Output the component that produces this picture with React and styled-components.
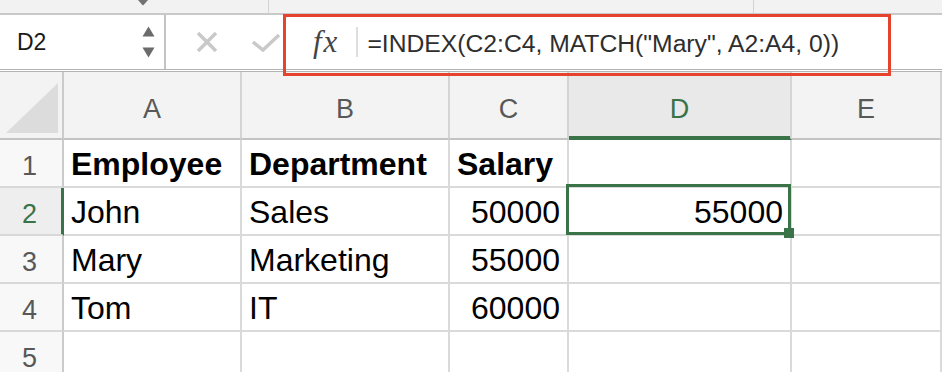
import React from 'react';
import styled, { createGlobalStyle } from 'styled-components';

const GREEN = '#3b7349';

const GlobalStyle = createGlobalStyle`
  html, body {
    margin: 0;
    padding: 0;
    background: #fff;
  }
  body {
    font-family: 'Liberation Sans', Arial, sans-serif;
  }
`;

const Window = styled.div`
  position: relative;
  width: 942px;
  height: 372px;
  overflow: hidden;
  background: #fff;
`;

// ribbon remnants above the formula bar
const TopStrip = styled.div`
  display: flex;
  height: 13px;
  background: #f2f2f2;
`;

const StripSegment = styled.div`
  flex: none;
  box-sizing: border-box;
  width: ${(p) => p.$width}px;
  border-right: 1px solid #d4d4d4;
  display: flex;
  align-items: flex-start;
  padding-left: ${(p) => p.$inset || 0}px;
`;

const FormulaBar = styled.div`
  display: flex;
  box-sizing: border-box;
  height: 59px;
  border-top: 2px solid #c9c9c9;
  border-bottom: 3px double #b3b3b3;
  background: #fff;
`;

const NameBox = styled.div`
  flex: none;
  box-sizing: border-box;
  width: 166px;
  display: flex;
  align-items: center;
  padding: 0 9px 0 17px;
  border-right: 2px solid #c4c4c4;
  font-size: 23px;
  color: #1a1a1a;
`;

const Spinner = styled.svg`
  margin-left: auto;
  display: block;
`;

const EditActions = styled.div`
  flex: none;
  display: flex;
  align-items: center;
  padding-left: 30px;
  gap: 33px;
`;

const ActionIcon = styled.svg`
  display: block;
  fill: none;
  stroke: #c9c9c9;
  stroke-width: 3.5;
`;

const FormulaInput = styled.div`
  flex: 1;
  display: flex;
  align-items: center;
  margin-left: 32px;
  min-width: 0;
`;

const FxLabel = styled.span`
  font-family: 'Liberation Serif', 'Times New Roman', serif;
  font-style: italic;
  font-size: 31px;
  letter-spacing: 2px;
  color: #444;
`;

const FxDivider = styled.span`
  width: 2px;
  height: 30px;
  margin-left: 17px;
  background: #dedede;
`;

const FormulaText = styled.span`
  margin-left: 9px;
  padding-top: 4px;
  font-size: 24.7px;
  color: #2e2e2e;
  white-space: nowrap;
`;

const Highlight = styled.div`
  position: absolute;
  left: 283px;
  top: 14px;
  width: 608px;
  height: 62px;
  box-sizing: border-box;
  border: 3px solid #e5432d;
  pointer-events: none;
  z-index: 5;
`;

const Sheet = styled.div`
  display: grid;
  grid-template-columns: 64px 178px 208px 119px 223px 150px;
  grid-template-rows: 68px repeat(5, 48px);
`;

const Corner = styled.div`
  box-sizing: border-box;
  background: #f3f3f3;
  border-right: 2px solid #cbcbcb;
  border-bottom: 2px solid #c3c3c3;
  display: flex;
  align-items: flex-end;
  padding: 0 4px 5px 6px;
`;

const CornerTriangle = styled.div`
  width: 52px;
  height: 50px;
  background: #dcdcdc;
  clip-path: polygon(100% 0, 100% 100%, 0 100%);
`;

const ColumnHeader = styled.div`
  box-sizing: border-box;
  display: flex;
  align-items: center;
  justify-content: center;
  padding-top: 8px;
  background: ${(p) => (p.$active ? '#e9e9e9' : '#f3f3f3')};
  border-right: 2px solid #d4d4d4;
  border-bottom: 2px solid ${(p) => (p.$active ? GREEN : '#c3c3c3')};
  box-shadow: ${(p) => (p.$active ? `inset 0 -2px 0 ${GREEN}` : 'none')};
  color: ${(p) => (p.$active ? GREEN : '#585858')};
  font-size: 27px;
`;

const RowHeader = styled.div`
  box-sizing: border-box;
  display: flex;
  align-items: center;
  justify-content: center;
  padding: 6px 3px 0 0;
  background: ${(p) => (p.$active ? '#eeeeee' : '#f8f8f8')};
  border-right: 2px solid ${(p) => (p.$active ? GREEN : '#cbcbcb')};
  box-shadow: ${(p) => (p.$active ? `inset -1px 0 0 ${GREEN}` : 'none')};
  border-bottom: 2px solid #d8d8d8;
  color: ${(p) => (p.$active ? GREEN : '#585858')};
  font-size: 27px;
`;

const Cell = styled.div`
  position: relative;
  box-sizing: border-box;
  display: flex;
  align-items: center;
  justify-content: ${(p) => (p.$numeric ? 'flex-end' : 'flex-start')};
  padding: 2px 7px 0 7px;
  border-right: 2px solid #dadada;
  border-bottom: 2px solid #dadada;
  font-size: 32px;
  font-weight: ${(p) => (p.$bold ? 700 : 400)};
  color: #000;
  white-space: nowrap;
`;

const Selection = styled.div`
  position: absolute;
  left: -3px;
  top: -4px;
  right: -1px;
  bottom: -1px;
  border: 3px solid ${GREEN};
  pointer-events: none;
  z-index: 2;
`;

const FillHandle = styled.div`
  position: absolute;
  right: -4px;
  bottom: -4px;
  width: 10px;
  height: 10px;
  background: ${GREEN};
  z-index: 3;
`;

const columns = ['A', 'B', 'C', 'D', 'E'];

const rows = [
  { bold: true, values: ['Employee', 'Department', 'Salary', '', ''] },
  { values: ['John', 'Sales', '50000', '55000', ''] },
  { values: ['Mary', 'Marketing', '55000', '', ''] },
  { values: ['Tom', 'IT', '60000', '', ''] },
  { values: ['', '', '', '', ''] }
];

const activeCol = 3;
const activeRow = 1;

function App() {
  return (
    <Window>
      <GlobalStyle />
      <TopStrip>
        <StripSegment $width={269} $inset={138}>
          <svg width='10' height='6' viewBox='0 0 10 6'>
            <path d='M0 0 H10 L5.6 5 Q5 5.7 4.4 5 Z' fill='#737373' />
          </svg>
        </StripSegment>
        <StripSegment $width={485} />
      </TopStrip>

      <FormulaBar>
        <NameBox>
          D2
          <Spinner width='13' height='32' viewBox='0 0 13 32'>
            <polygon points='0.5,10.5 12.5,10.5 6.5,0.5' fill='#6b6b6b' />
            <polygon points='0.5,21.5 12.5,21.5 6.5,31.5' fill='#6b6b6b' />
          </Spinner>
        </NameBox>
        <EditActions>
          <ActionIcon width='22' height='22' viewBox='0 0 22 22'>
            <path d='M2 2 L20 20 M20 2 L2 20' />
          </ActionIcon>
          <ActionIcon width='30' height='19' viewBox='0 0 30 19'>
            <path d='M2 9 L12 17 L28 2' />
          </ActionIcon>
        </EditActions>
        <FormulaInput>
          <FxLabel>fx</FxLabel>
          <FxDivider />
          <FormulaText>=INDEX(C2:C4, MATCH("Mary", A2:A4, 0))</FormulaText>
        </FormulaInput>
      </FormulaBar>

      <Highlight />

      <Sheet>
        <Corner>
          <CornerTriangle />
        </Corner>
        {columns.map((col, i) => (
          <ColumnHeader key={col} $active={i === activeCol}>
            {col}
          </ColumnHeader>
        ))}
        {rows.map((row, r) => (
          <React.Fragment key={r}>
            <RowHeader $active={r === activeRow}>{r + 1}</RowHeader>
            {row.values.map((val, c) => {
              const isSelected = r === activeRow && c === activeCol;
              return (
                <Cell
                  key={c}
                  $bold={row.bold}
                  $numeric={/^\d+$/.test(val)}
                >
                  {val}
                  {isSelected && (
                    <>
                      <Selection />
                      <FillHandle />
                    </>
                  )}
                </Cell>
              );
            })}
          </React.Fragment>
        ))}
      </Sheet>
    </Window>
  );
}

export default App;
